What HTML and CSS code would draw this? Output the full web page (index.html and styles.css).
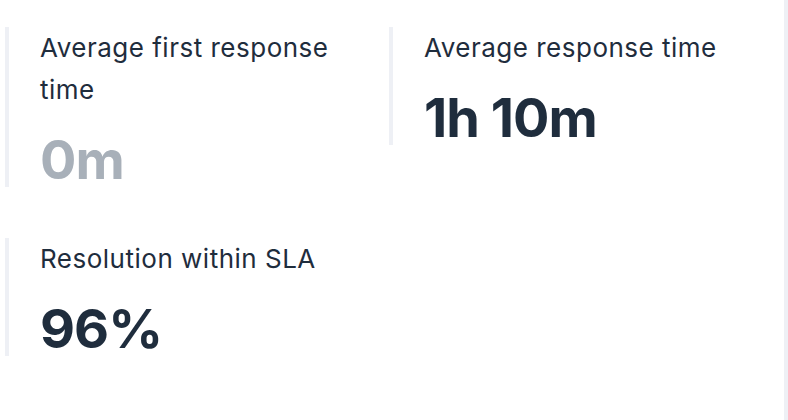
FILE: index.html
```html
<!DOCTYPE html>
<html lang="en">

<head>
    <meta charset="utf-8">
    <title>Rapports - métriques</title>
    <meta name="viewport" content="width=device-width, initial-scale=1.0">
    <link rel="stylesheet" href="styles.css">
</head>

<body>
    <main class="panneau">
        <!-- Grille des métriques -->
        <section class="grille-metriques">
            <div class="metrique">
                <p class="metrique-titre">Average first response time</p>
                <p class="metrique-valeur vide">0m</p>
            </div>
            <div class="metrique">
                <p class="metrique-titre">Average response time</p>
                <p class="metrique-valeur">1h 10m</p>
            </div>
            <div class="metrique">
                <p class="metrique-titre">Resolution within SLA</p>
                <p class="metrique-valeur">96%</p>
            </div>
        </section>
    </main>
</body>

</html>
```

FILE: styles.css
```css
/* Normalisation
============================================================*/

* {
    margin: 0;
    padding: 0;
    box-sizing: border-box;
}

html,
body {
    height: 100%;
}

body {
    font-family: Inter, "Noto Sans", sans-serif;
    color: #1f2d3d;
    background-color: #ffffff;
}

/* Panneau principal
============================================================*/

.panneau {
    min-height: 100%;
    padding: 27px 0 0 5px;
    /*Bordure droite du panneau*/
    border-right: 4px solid #eef0f5;
}

/* Grille des métriques
============================================================*/

.grille-metriques {
    display: grid;
    grid-template-columns: 384px 1fr;
    row-gap: 51px;
    align-items: start;
}

.metrique {
    padding: 0 32px 0 31px;
    border-left: 4px solid #eef0f5;
}

.metrique-titre {
    font-size: 26px;
    line-height: 42px;
    font-weight: 400;
    letter-spacing: 0.5px;
}

.metrique-valeur {
    margin-top: 22px;
    font-size: 54px;
    line-height: 54px;
    font-weight: 700;
    letter-spacing: -1px;
}

/*Valeur absente : texte grisé*/
.metrique-valeur.vide {
    color: #a8b0b9;
}
```
